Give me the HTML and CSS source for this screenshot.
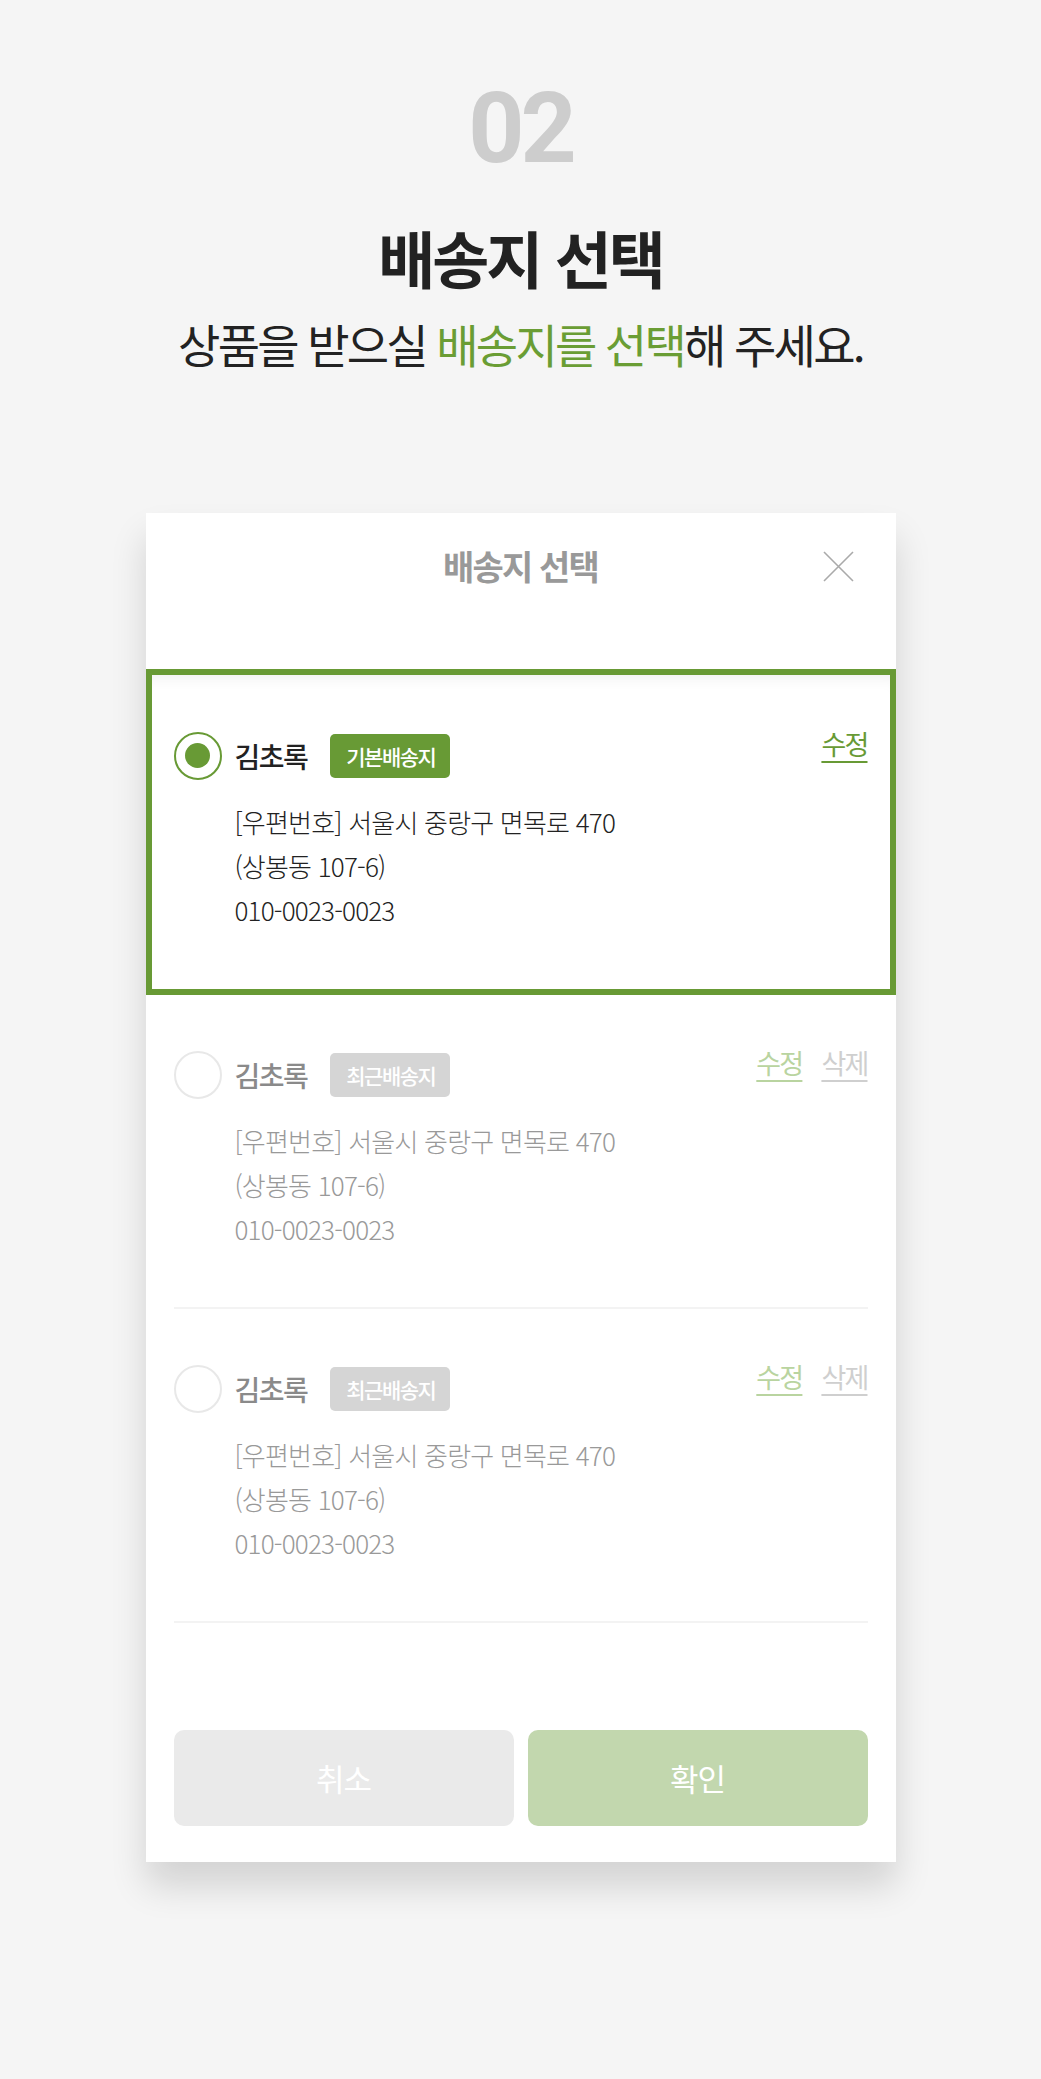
FILE: index.html
```html
<!DOCTYPE html>
<html lang="ko">
<head>
    <meta charset="UTF-8">
    <meta name="viewport" content="width=device-width, initial-scale=1.0">
    <title>배송지 선택</title>
    <link rel="stylesheet" href="styles.css">
</head>
<body>

    <section class="intro">
        <p class="step">02</p>
        <h1 class="intro-title">배송지 선택</h1>
        <p class="intro-desc">상품을 받으실 <em>배송지를 선택</em>해 주세요.</p>
    </section>

    <div class="modal">
        <div class="modal-head">
            <span></span>
            <h2 class="modal-title">배송지 선택</h2>
            <button class="close" aria-label="닫기">
                <svg width="31" height="31" viewBox="0 0 31 31">
                    <path d="M1 1L30 30M30 1L1 30" stroke="#aaa" stroke-width="1.6" fill="none"/>
                </svg>
            </button>
        </div>

        <ul class="addr-list">
            <li class="addr-item selected">
                <span class="radio"></span>
                <div class="who">
                    <strong class="name">김초록</strong>
                    <span class="badge">기본배송지</span>
                </div>
                <div class="actions">
                    <a href="#">수정</a>
                </div>
                <p class="addr">[우편번호] 서울시 중랑구 면목로 470<br>(상봉동 107-6)<br>010-0023-0023</p>
            </li>
            <li class="addr-item">
                <span class="radio"></span>
                <div class="who">
                    <strong class="name">김초록</strong>
                    <span class="badge">최근배송지</span>
                </div>
                <div class="actions">
                    <a href="#">수정</a>
                    <a href="#" class="del">삭제</a>
                </div>
                <p class="addr">[우편번호] 서울시 중랑구 면목로 470<br>(상봉동 107-6)<br>010-0023-0023</p>
            </li>
            <li class="addr-item">
                <span class="radio"></span>
                <div class="who">
                    <strong class="name">김초록</strong>
                    <span class="badge">최근배송지</span>
                </div>
                <div class="actions">
                    <a href="#">수정</a>
                    <a href="#" class="del">삭제</a>
                </div>
                <p class="addr">[우편번호] 서울시 중랑구 면목로 470<br>(상봉동 107-6)<br>010-0023-0023</p>
            </li>
        </ul>

        <div class="modal-foot">
            <button class="btn cancel">취소</button>
            <button class="btn ok">확인</button>
        </div>
    </div>

</body>
</html>
```

FILE: styles.css
```css
* { box-sizing: border-box; margin: 0; padding: 0; }
body {
    font-family: "Noto Sans CJK KR", "Noto Sans", sans-serif;
    background: #f5f5f5; color: #222;
    padding-bottom: 200px;
}
ul { list-style: none; }
button { font-family: inherit; border: none; background: none; cursor: pointer; }

/* intro */
.intro { text-align: center; padding-top: 80px; }
.step {
    font-family: Roboto, "Liberation Sans", sans-serif;
    font-size: 98px; font-weight: 700; line-height: 1;
    color: #cdcdcd; letter-spacing: -4px;
}
.intro-title {
    margin-top: 42px;
    font-size: 62px; font-weight: 700; line-height: 1.2;
    letter-spacing: -3px; color: #222;
}
.intro-desc {
    margin-top: 22px;
    font-size: 46px; font-weight: 400; line-height: 1.2;
    letter-spacing: -2.7px; color: #222;
}
.intro-desc em { font-style: normal; color: #6a9d34; }

/* modal */
.modal {
    width: 750px; margin: 141px auto 0;
    background: #fff;
    box-shadow: 0 24px 34px rgba(0, 0, 0, 0.14);
}
.modal-head {
    height: 156px; padding: 33px 42px 0 42px;
    display: grid; grid-template-columns: 1fr auto 1fr; align-items: start;
}
.modal-title {
    font-size: 34px; font-weight: 700; line-height: 40px;
    color: #999; letter-spacing: -1.8px;
}
.close { justify-self: end; width: 31px; height: 31px; margin-top: 5px; display: block; }
.close svg { display: block; }

/* address items */
.addr-item {
    margin: 0 28px; padding: 56px 0;
    border-bottom: 2px solid #f3f3f3;
    display: grid; grid-template-columns: 48px 1fr auto;
    column-gap: 13px; align-items: center;
}
.addr-item.selected {
    margin: 0; padding: 57px 22px;
    border: 6px solid #689a35;
    box-shadow: inset 0 14px 16px -12px rgba(0, 0, 0, 0.07);
}
.radio {
    width: 48px; height: 48px; border-radius: 50%;
    border: 2px solid #e8e8e8; background: #fff;
    display: flex; align-items: center; justify-content: center;
}
.selected .radio { border-color: #689a35; }
.selected .radio::after {
    content: ""; width: 25px; height: 25px; border-radius: 50%;
    background: #689a35;
}
.who { display: flex; align-items: center; gap: 23px; }
.name {
    font-size: 28px; font-weight: 500; line-height: 1;
    letter-spacing: -1.5px; color: #8a8a8a;
}
.selected .name { color: #222; }
.badge {
    height: 44px; padding: 0 15px 0 16px; border-radius: 5px;
    display: flex; align-items: center;
    background: #d5d5d5; color: #fff;
    font-size: 21px; font-weight: 500; letter-spacing: -1.5px;
}
.selected .badge { background: #689a35; }
.actions { align-self: start; display: flex; gap: 19px; margin-top: -6px; }
.actions a {
    font-size: 27px; line-height: 36px; letter-spacing: -1.8px;
    color: #b9d4a0; text-decoration: underline;
    text-underline-offset: 6px; text-decoration-thickness: 2px;
}
.actions a.del { color: #cfcfcf; }
.selected .actions a { color: #689a35; }
.addr {
    grid-column: 2 / 4; margin-top: 20px;
    font-size: 26px; font-weight: 300; line-height: 44px;
    letter-spacing: -0.8px; color: #999;
}
.selected .addr { color: #222; }

/* footer */
.modal-foot {
    padding: 107px 28px 36px;
    display: grid; grid-template-columns: 1fr 1fr; gap: 14px;
}
.btn {
    height: 96px; border-radius: 10px;
    font-size: 31px; font-weight: 400; color: #fff; letter-spacing: -1px;
}
.btn.cancel { background: #eaeaea; }
.btn.ok { background: #c2d7ae; }
```
